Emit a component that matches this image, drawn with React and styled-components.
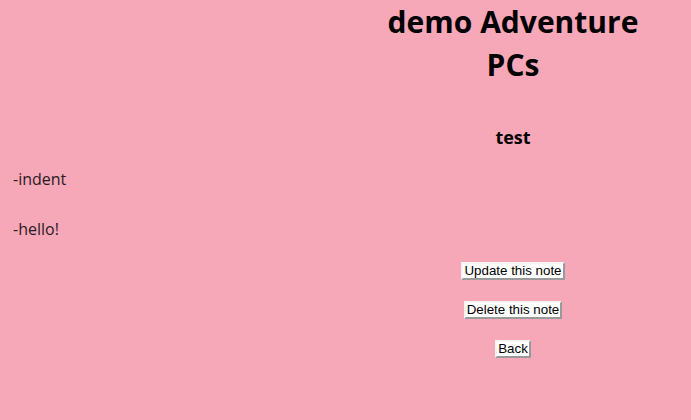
import React from 'react';
import styled, { createGlobalStyle } from 'styled-components';

const GlobalStyle = createGlobalStyle`
  html, body {
    margin: 0;
    padding: 0;
    background: #f7a8b8;
  }
  body {
    font-family: "Open Sans", "Noto Sans", sans-serif;
    color: #000;
  }
`;

const Page = styled.div`
  display: grid;
  grid-template-columns: 345px 1fr;
  min-height: 420px;
  background: #f7a8b8;
`;

const Notes = styled.div`
  padding: 168px 0 0 13px;
  display: flex;
  flex-direction: column;
  gap: 27px;
`;

const Line = styled.p`
  margin: 0;
  font-size: 16px;
  line-height: 23px;
  color: #2a1a1e;
`;

const Detail = styled.div`
  display: flex;
  flex-direction: column;
  align-items: center;
  padding-right: 10px;
`;

const Title = styled.h1`
  margin: 0;
  width: 300px;
  text-align: center;
  font-size: 30px;
  line-height: 43px;
  font-weight: 700;
`;

const Subtitle = styled.h3`
  margin: 39px 0 0;
  font-size: 18px;
  line-height: 24px;
  font-weight: 700;
`;

const Actions = styled.div`
  margin-top: 113px;
  display: flex;
  flex-direction: column;
  align-items: center;
  gap: 21px;
`;

const Button = styled.button`
  font-family: "Liberation Sans", Arial, sans-serif;
  font-size: 13.33px;
  line-height: 14px;
  height: 18px;
  color: #000;
  background: #fff;
  padding: 0 1px;
  border: 2px solid;
  border-color: #f4f4f4 #9a9a9a #9a9a9a #f4f4f4;
  cursor: pointer;
`;

export default function App() {
  return (
    <>
      <GlobalStyle />
      <Page>
        <Notes>
          <Line>-indent</Line>
          <Line>-hello!</Line>
        </Notes>
        <Detail>
          <Title>demo Adventure PCs</Title>
          <Subtitle>test</Subtitle>
          <Actions>
            <Button>Update this note</Button>
            <Button>Delete this note</Button>
            <Button>Back</Button>
          </Actions>
        </Detail>
      </Page>
    </>
  );
}
